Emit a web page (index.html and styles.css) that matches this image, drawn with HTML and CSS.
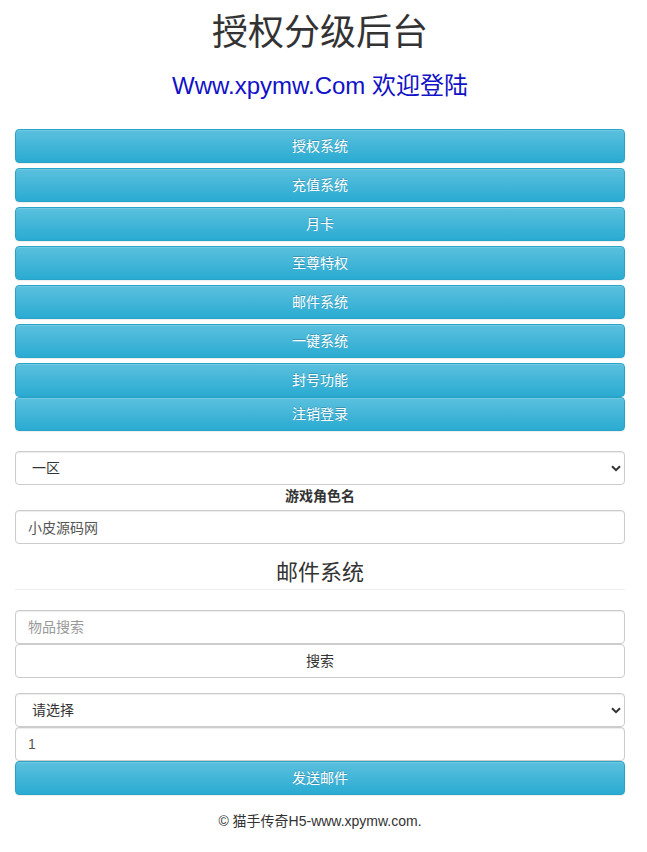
FILE: index.html
```html
<!DOCTYPE html>
<html lang="zh-CN">
<head>
<meta charset="utf-8">
<title>授权分级后台</title>
<link rel="stylesheet" href="styles.css">
</head>
<body>
<div class="container">
  <h1 class="title">授权分级后台</h1>
  <h2 class="welcome">Www.xpymw.Com 欢迎登陆</h2>

  <div class="menu">
    <button class="btn btn-info">授权系统</button>
    <button class="btn btn-info">充值系统</button>
    <button class="btn btn-info">月卡</button>
    <button class="btn btn-info">至尊特权</button>
    <button class="btn btn-info">邮件系统</button>
    <button class="btn btn-info">一键系统</button>
    <button class="btn btn-info">封号功能</button>
    <button class="btn btn-info btn-flush">注销登录</button>
  </div>

  <div class="select-wrap">
    <select class="form-control select"><option>一区</option></select>
    <svg class="chevron" width="10" height="7" viewBox="0 0 10 7"><path d="M1 1.2 L5 5.2 L9 1.2" fill="none" stroke="#333" stroke-width="2"/></svg>
  </div>
  <div class="label-row"><label class="field-label">游戏角色名</label></div>
  <input class="form-control" type="text" value="小皮源码网">

  <h3 class="section-title">邮件系统</h3>
  <hr class="divider">

  <input class="form-control" type="text" placeholder="物品搜索">
  <button class="btn btn-default">搜索</button>

  <div class="select-wrap send-select">
    <select class="form-control select"><option>请选择</option></select>
    <svg class="chevron" width="10" height="7" viewBox="0 0 10 7"><path d="M1 1.2 L5 5.2 L9 1.2" fill="none" stroke="#333" stroke-width="2"/></svg>
  </div>
  <input class="form-control" type="text" value="1">
  <button class="btn btn-info">发送邮件</button>

  <p class="footer">© 猫手传奇H5-www.xpymw.com.</p>
</div>
</body>
</html>
```

FILE: styles.css
```css
* { box-sizing: border-box; }

html, body {
  margin: 0;
  padding: 0;
  background: #fff;
}

body {
  font-family: "Liberation Sans", Arial, "Noto Sans CJK SC", sans-serif;
  font-size: 14px;
  line-height: 20px;
  color: #333;
}

.container {
  padding: 0 22px 0 15px;
  width: 647px;
}

.title {
  margin: 13px 0 0;
  font-size: 36px;
  font-weight: 400;
  line-height: 40px;
  text-align: center;
  color: #333;
}

.welcome {
  margin: 19px 0 0;
  font-size: 24px;
  font-weight: 400;
  line-height: 28px;
  text-align: center;
  color: #1212c8;
}

.menu {
  margin-top: 29px;
  display: flex;
  flex-direction: column;
  gap: 5px;
}

.btn {
  display: block;
  width: 100%;
  height: 34px;
  padding: 6px 12px;
  font-family: inherit;
  font-size: 14px;
  line-height: 20px;
  text-align: center;
  border-radius: 4px;
  border: 1px solid transparent;
  cursor: pointer;
}

.btn-info {
  color: #fff;
  background: linear-gradient(to bottom, #5bc0de 0, #2aabd2 100%);
  border-color: #28a4c9;
  text-shadow: 0 -1px 0 rgba(0, 0, 0, .2);
  box-shadow: inset 0 1px 0 rgba(255, 255, 255, .15), 0 1px 1px rgba(0, 0, 0, .075);
}

.btn-flush {
  margin-top: -5px;
}

.btn-default {
  color: #333;
  background: #fff;
  border-color: #ccc;
}

.form-control {
  display: block;
  width: 100%;
  height: 34px;
  padding: 6px 12px;
  font-family: inherit;
  font-size: 14px;
  line-height: 20px;
  color: #555;
  background: #fff;
  border: 1px solid #ccc;
  border-radius: 4px;
  box-shadow: inset 0 1px 1px rgba(0, 0, 0, .075);
  outline: none;
}

.form-control::placeholder {
  color: #999;
}

.select-wrap {
  position: relative;
  margin-top: 20px;
}

.select {
  appearance: none;
  -webkit-appearance: none;
  padding-left: 16px;
  color: #333;
}

.chevron {
  position: absolute;
  right: 4px;
  top: 14px;
  pointer-events: none;
}

.send-select {
  margin-top: 15px;
}

.label-row {
  text-align: center;
  height: 20px;
  margin: 1px 0 4px;
}

.field-label {
  font-weight: 700;
}

.section-title {
  margin: 16px 0 0;
  font-size: 22px;
  font-weight: 400;
  line-height: 26px;
  text-align: center;
  color: #333;
}

.divider {
  margin: 3px 0 20px;
  border: 0;
  border-top: 1px solid #eee;
}

.footer {
  margin: 16px 0 0;
  text-align: center;
  color: #333;
}
```
